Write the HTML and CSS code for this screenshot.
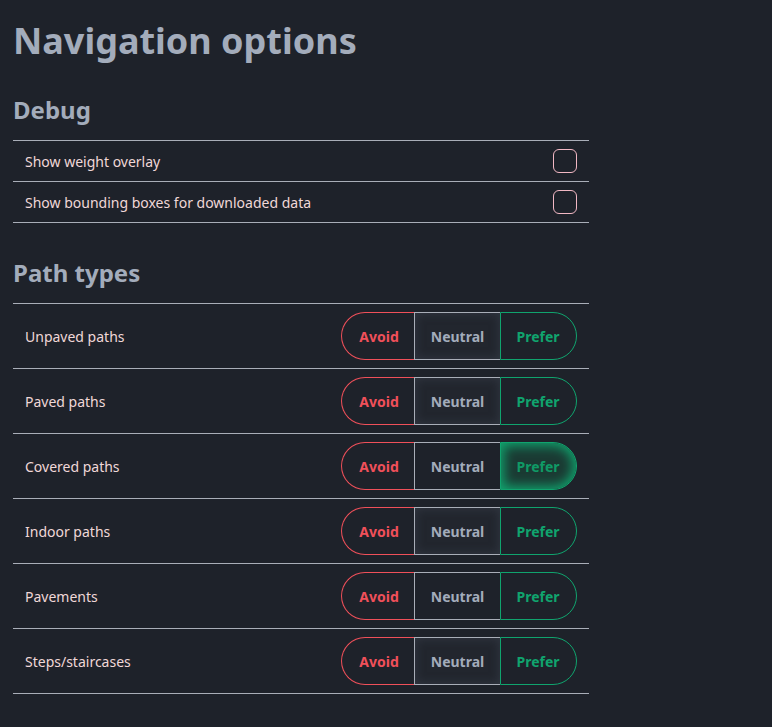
FILE: index.html
```html
<!DOCTYPE html>
<html>
<head>
<meta charset="utf-8">
<link rel="stylesheet" href="styles.css">
</head>
<body>
<main class="page">
  <h1 class="title">Navigation options</h1>

  <h2 class="section-title">Debug</h2>
  <div class="list">
    <div class="row row-short">
      <span class="label">Show weight overlay</span>
      <span class="checkbox"></span>
    </div>
    <div class="row row-short">
      <span class="label">Show bounding boxes for downloaded data</span>
      <span class="checkbox"></span>
    </div>
  </div>

  <h2 class="section-title section-gap">Path types</h2>
  <div class="list">
    <div class="row">
      <span class="label">Unpaved paths</span>
      <div class="toggle"><span class="seg avoid">Avoid</span><span class="seg neutral selected">Neutral</span><span class="seg prefer">Prefer</span></div>
    </div>
    <div class="row">
      <span class="label">Paved paths</span>
      <div class="toggle"><span class="seg avoid">Avoid</span><span class="seg neutral selected">Neutral</span><span class="seg prefer">Prefer</span></div>
    </div>
    <div class="row">
      <span class="label">Covered paths</span>
      <div class="toggle"><span class="seg avoid">Avoid</span><span class="seg neutral">Neutral</span><span class="seg prefer selected">Prefer</span></div>
    </div>
    <div class="row">
      <span class="label">Indoor paths</span>
      <div class="toggle"><span class="seg avoid">Avoid</span><span class="seg neutral selected">Neutral</span><span class="seg prefer">Prefer</span></div>
    </div>
    <div class="row">
      <span class="label">Pavements</span>
      <div class="toggle"><span class="seg avoid">Avoid</span><span class="seg neutral">Neutral</span><span class="seg prefer">Prefer</span></div>
    </div>
    <div class="row">
      <span class="label">Steps/staircases</span>
      <div class="toggle"><span class="seg avoid">Avoid</span><span class="seg neutral selected">Neutral</span><span class="seg prefer">Prefer</span></div>
    </div>
  </div>
</main>
</body>
</html>
```

FILE: styles.css
```css
html, body {
  margin: 0;
  padding: 0;
  background: #1e222a;
}

body {
  font-family: "Noto Sans", "Open Sans", sans-serif;
  color: #a3acbb;
  min-height: 727px;
}

.page {
  width: 576px;
  padding: 18px 0 0 13px;
}

.title {
  margin: 0;
  font-size: 36px;
  font-weight: 700;
  line-height: 46px;
  color: #a3acbb;
}

.section-title {
  margin: 31px 0 0 0;
  font-size: 24px;
  font-weight: 700;
  line-height: 30px;
  color: #a3acbb;
}

.section-gap {
  margin-top: 35px;
}

.list {
  margin-top: 15px;
  border-top: 1px solid #a9aeb8;
}

.row {
  display: flex;
  align-items: center;
  justify-content: space-between;
  height: 64px;
  padding: 0 12px;
  border-bottom: 1px solid #a9aeb8;
}

.row-short {
  height: 40px;
}

.label {
  font-size: 14px;
  color: #f0d8d8;
}

.checkbox {
  width: 22px;
  height: 22px;
  border: 1px solid #f2b8c4;
  border-radius: 6px;
}

.toggle {
  display: flex;
  height: 48px;
}

.seg {
  display: flex;
  align-items: center;
  justify-content: center;
  box-sizing: border-box;
  height: 48px;
  font-size: 14px;
  font-weight: 700;
}

.avoid {
  width: 73px;
  padding-left: 2px;
  color: #f0505a;
  border: 1px solid #f0505a;
  border-right: none;
  border-radius: 24px 0 0 24px;
}

.neutral {
  width: 86px;
  color: #a3acbb;
  border: 1px solid #a9aeb8;
  border-right: none;
}

.neutral.selected {
  background: #22262e;
  box-shadow: inset 0 0 10px 1px rgba(50, 55, 66, 0.9);
}

.prefer {
  width: 77px;
  padding-right: 1px;
  color: #10a46e;
  border: 1px solid #10a46e;
  border-radius: 0 24px 24px 0;
}

.prefer.selected {
  background: #1b3a33;
  color: #0f9a66;
  box-shadow: inset 0 0 12px 3px #10a46e;
}
```
